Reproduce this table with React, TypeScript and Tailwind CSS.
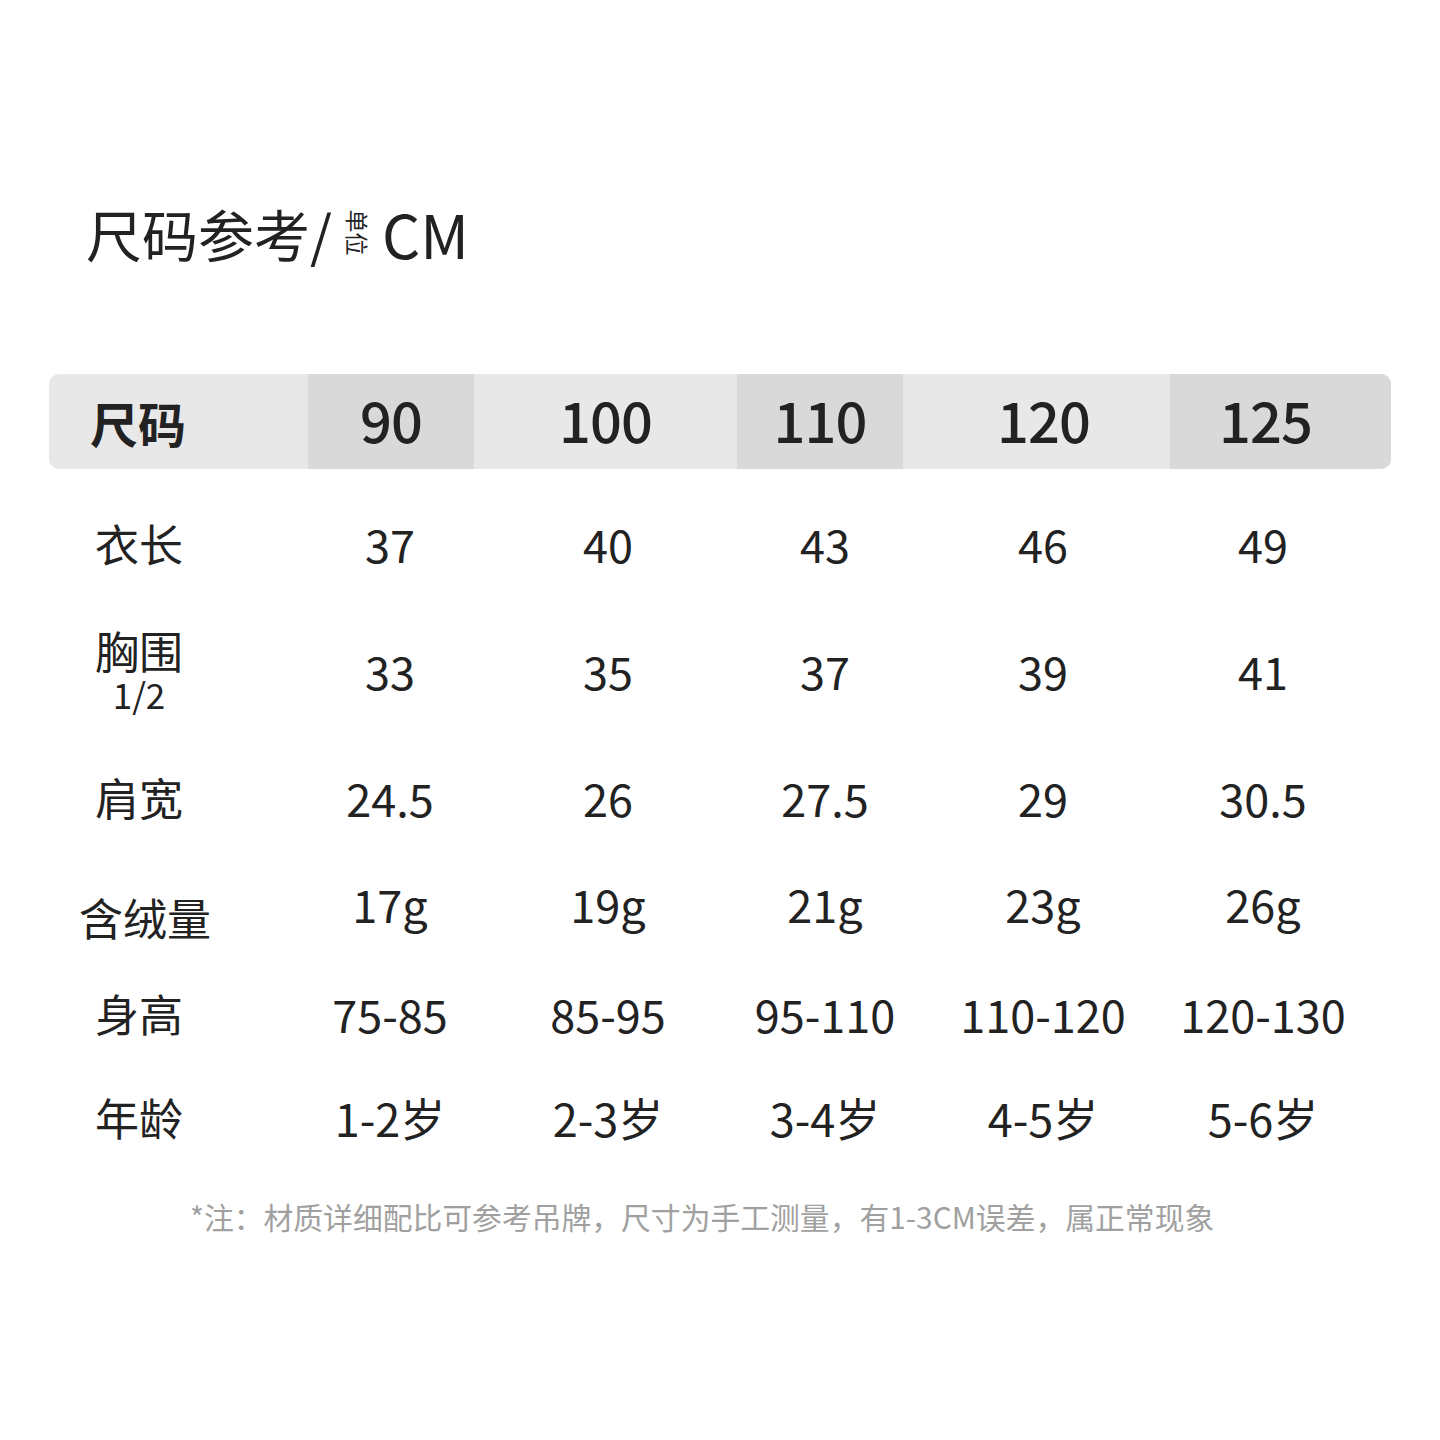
const SANS = "font-['Noto_Sans_CJK_SC','Noto_Sans',sans-serif]";

const header = [
  { v: '90', cls: 'w-[166px] bg-[#d9d9d9]' },
  { v: '100', cls: 'w-[263px] bg-[#e8e8e8]' },
  { v: '110', cls: 'w-[166px] bg-[#d9d9d9]' },
  { v: '120', cls: 'w-[267px] bg-[#e8e8e8] pl-[14px]' },
  { v: '125', cls: 'flex-1 bg-[#d9d9d9] pr-[30px]' },
];

type Row = { label: React.ReactNode; values: string[]; cls: string; labelCls?: string; valueCls?: string };

const rows: Row[] = [
  { label: '衣长', values: ['37', '40', '43', '46', '49'], cls: 'mt-[24px]' },
  {
    label: (
      <div className="flex flex-col items-center">
        <span className="h-[48px] leading-[48px]">胸围</span>
        <span className="h-[40px] text-[35px] leading-[40px]">1/2</span>
      </div>
    ),
    values: ['33', '35', '37', '39', '41'],
    cls: 'mt-[27px]',
  },
  { label: '肩宽', values: ['24.5', '26', '27.5', '29', '30.5'], cls: 'mt-[27px]' },
  {
    label: '含绒量',
    values: ['17g', '19g', '21g', '23g', '26g'],
    cls: 'mt-[10px]',
    labelCls: 'pt-[20px] pl-[12px]',
    valueCls: 'pb-[8px]',
  },
  { label: '身高', values: ['75-85', '85-95', '95-110', '110-120', '120-130'], cls: 'mt-[6px]' },
  { label: '年龄', values: ['1-2岁', '2-3岁', '3-4岁', '4-5岁', '5-6岁'], cls: 'mt-[4px]' },
];

export default function App() {
  return (
    <div className={`h-[1440px] w-[1440px] bg-white text-[#222222] ${SANS}`}>
      {/* title */}
      <div className="box-content flex h-[85px] items-center pl-[86px] pt-[190px]">
        <span className="text-[56px] leading-none">尺码参考/</span>
        <span className="ml-[2px] inline-block rotate-90 text-[23px] leading-none">单位</span>
        <span className="ml-[2px] text-[60px] leading-none">CM</span>
      </div>

      <div className="mx-[49px] mt-[99px]">
        {/* header bar */}
        <div className="flex h-[95px] overflow-hidden rounded-[10px] bg-[#e8e8e8]">
          <div className="flex w-[259px] items-center pl-[41px] text-[48px] font-bold">尺码</div>
          {header.map((h) => (
            <div
              key={h.v}
              className={`flex items-center justify-center pb-[6px] text-[56px] font-medium tracking-[-1px] ${h.cls}`}
            >
              {h.v}
            </div>
          ))}
        </div>

        {rows.map((r, i) => (
          <div
            key={i}
            className={`grid h-[100px] grid-cols-[232px_218px_218px_216px_220px_220px] items-center ${r.cls}`}
          >
            <div className={`flex w-[180px] justify-center text-[44px] leading-none ${r.labelCls ?? ''}`}>
              {r.label}
            </div>
            {r.values.map((v) => (
              <div key={v} className={`text-center text-[45px] leading-none ${r.valueCls ?? ''}`}>
                {v}
              </div>
            ))}
          </div>
        ))}
      </div>

      <p className="mt-[27px] pl-[190px] text-[29.8px] leading-[45px] text-[#a0a0a0]">
        *注：材质详细配比可参考吊牌，尺寸为手工测量，有1-3CM误差，属正常现象
      </p>
    </div>
  );
}
